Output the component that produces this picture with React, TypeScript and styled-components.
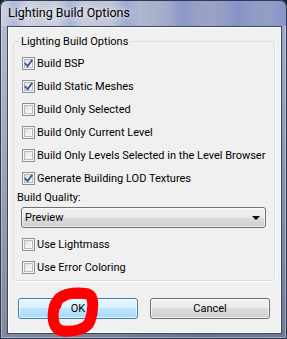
import React from 'react';
import styled, { createGlobalStyle } from 'styled-components';

const GlobalStyle = createGlobalStyle`
  html, body {
    margin: 0;
    padding: 0;
    overflow: hidden;
    background: #1c2433;
  }
`;

const uiFont = `Roboto, "Noto Sans", "Liberation Sans", sans-serif`;

const Window = styled.div`
  position: relative;
  width: 287px;
  height: 339px;
  display: flex;
  flex-direction: column;
  border-radius: 7px 7px 0 0;
  background:
    linear-gradient(to bottom, rgba(255, 255, 255, 0.12), rgba(0, 0, 0, 0.25)),
    linear-gradient(to right, #aeb8cc 0%, #9eaac6 40%, #8c98c6 70%, #93a3c8 100%);
  box-shadow: inset 0 0 0 1px #2e3a52, inset 0 0 0 2px rgba(255, 255, 255, 0.35);
  font-family: ${uiFont};
  white-space: nowrap;
  overflow: hidden;
`;

const TitleBar = styled.div`
  height: 26px;
  flex: none;
  display: flex;
  align-items: center;
  padding-left: 8px;
  border-radius: 7px 7px 0 0;
  background:
    repeating-linear-gradient(
      to right,
      rgba(120, 130, 200, 0) 0px,
      rgba(120, 130, 200, 0.35) 14px,
      rgba(120, 130, 200, 0) 28px,
      rgba(170, 180, 190, 0.2) 42px,
      rgba(120, 130, 200, 0) 56px
    ),
    linear-gradient(to right, #d0d6e1 0%, #c3cad9 35%, #97a1c6 65%, #8c97c8 100%);
  box-shadow: inset 0 1px 0 #2e3a52, inset 1px 0 0 #2e3a52, inset -1px 0 0 #2e3a52;
`;

const Title = styled.span`
  font-size: 12.5px;
  line-height: 16px;
  color: #000;
  text-shadow: 0 0 6px rgba(255, 255, 255, 0.9), 0 0 10px rgba(255, 255, 255, 0.6);
`;

const Client = styled.div`
  margin: 0 5px 5px 7px;
  flex: 1;
  display: flex;
  flex-direction: column;
  background: #f0f0f0;
  border: 1px solid #3a4760;
  box-shadow: inset 0 0 0 1px #ffffff;
`;

const Group = styled.fieldset`
  margin: 7px 6px 0 5px;
  padding: 3px 8px 1px 8px;
  border: 1px solid #d5dfe5;
  border-radius: 3px;
  box-shadow: 1px 1px 0 #ffffff;
  display: flex;
  flex-direction: column;
`;

const Legend = styled.legend`
  margin-left: -3px;
  padding: 0 2px;
  font-size: 11px;
  line-height: 15px;
  color: #000;
`;

const Row = styled.label`
  display: flex;
  align-items: center;
  height: 23px;
  font-size: 11px;
  color: #000;
`;

const Box = styled.span`
  width: 13px;
  height: 13px;
  box-sizing: border-box;
  flex: none;
  margin-right: 2px;
  border: 1px solid #8e8f8f;
  background: #f4f4f4;
  box-shadow: inset 0 0 0 1px #f4f4f4, inset 0 0 0 2px #b7bcc4;
  background-image: linear-gradient(135deg, #d2d6dc 0%, #f2f3f5 60%, #ffffff 100%);
  display: flex;
  align-items: center;
  justify-content: center;
`;

const FieldLabel = styled.div`
  font-size: 11px;
  line-height: 15px;
  margin-left: -5px;
  color: #000;
`;

const Combo = styled.div`
  margin: 2px 0 5px -1px;
  height: 21px;
  box-sizing: border-box;
  border: 1px solid #707070;
  border-radius: 3px;
  background: linear-gradient(to bottom, #f2f2f2 0%, #ebebeb 50%, #dddddd 50%, #cfcfcf 100%);
  box-shadow: inset 0 0 0 1px rgba(255, 255, 255, 0.7);
  display: flex;
  align-items: center;
  justify-content: space-between;
  padding: 0 5px 0 3px;
  font-size: 11px;
`;

const Arrow = styled.span`
  width: 0;
  height: 0;
  border-left: 4px solid transparent;
  border-right: 4px solid transparent;
  border-top: 4px solid #000;
`;

const Buttons = styled.div`
  display: flex;
  gap: 12px;
  margin-top: 17px;
  padding-left: 10px;
`;

const Button = styled.button<{ $default?: boolean }>`
  width: 120px;
  height: 21px;
  box-sizing: border-box;
  padding: 0;
  font-family: ${uiFont};
  font-size: 11px;
  color: #000;
  border-radius: 3px;
  border: 1px solid ${(p) => (p.$default ? '#3c7fb1' : '#707070')};
  background: ${(p) =>
    p.$default
      ? 'linear-gradient(to bottom, #eaf6fd 0%, #d9f0fc 50%, #bee6fd 50%, #a7d9f5 100%)'
      : 'linear-gradient(to bottom, #f2f2f2 0%, #ebebeb 50%, #dddddd 50%, #cfcfcf 100%)'};
  box-shadow: inset 0 0 0 1px rgba(255, 255, 255, 0.7);
`;

const Scribble = styled.svg`
  position: absolute;
  left: 0;
  top: 0;
  pointer-events: none;
`;

const Check = () => (
  <svg width="9" height="9" viewBox="0 0 9 9">
    <path d="M1.2 4.6 L3.6 7.2 L7.8 1.4" fill="none" stroke="#3f5b9c" strokeWidth="1.9" strokeLinecap="round" strokeLinejoin="round" />
  </svg>
);

const CheckRow = ({ label, checked }: { label: string; checked?: boolean }) => (
  <Row>
    <Box>{checked && <Check />}</Box>
    {label}
  </Row>
);

export default function App() {
  return (
    <>
      <GlobalStyle />
      <Window>
        <TitleBar>
          <Title>Lighting Build Options</Title>
        </TitleBar>
        <Client>
          <Group>
            <Legend>Lighting Build Options</Legend>
            <CheckRow label="Build BSP" checked />
            <CheckRow label="Build Static Meshes" checked />
            <CheckRow label="Build Only Selected" />
            <CheckRow label="Build Only Current Level" />
            <CheckRow label="Build Only Levels Selected in the Level Browser" />
            <CheckRow label="Generate Building LOD Textures" checked />
            <FieldLabel>Build Quality:</FieldLabel>
            <Combo>
              Preview
              <Arrow />
            </Combo>
            <CheckRow label="Use Lightmass" />
            <CheckRow label="Use Error Coloring" />
          </Group>
          <Buttons>
            <Button $default>OK</Button>
            <Button>Cancel</Button>
          </Buttons>
        </Client>
        <Scribble width="287" height="339" viewBox="0 0 287 339">
          <path
            d="M56 305 C58 292 78 292 88 294 C95 296 93 312 90 321 C87 329 75 332 63 331 C53 330 52 318 54 308 C55 302 59 298 64 296"
            fill="none"
            stroke="#ff0000"
            strokeWidth="11"
            strokeLinecap="round"
            strokeLinejoin="round"
          />
        </Scribble>
      </Window>
    </>
  );
}
